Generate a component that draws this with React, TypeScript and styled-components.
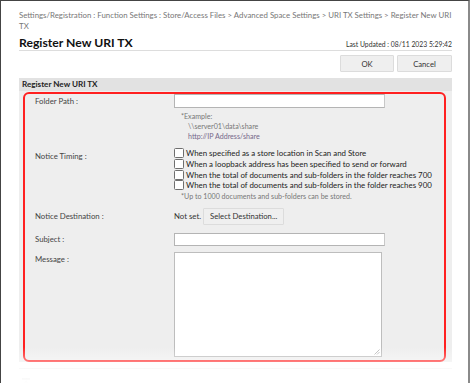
import React from 'react';
import styled, { createGlobalStyle } from 'styled-components';

const GlobalStyle = createGlobalStyle`
  html, body {
    margin: 0;
    padding: 0;
    background: #fff;
  }
  body {
    font-family: Lato, "Noto Sans", sans-serif;
    color: #333;
  }
`;

const Frame = styled.div`
  position: relative;
  box-sizing: border-box;
  width: 470px;
  height: 383px;
  overflow: hidden;
  border-top: 1px solid #444;
  border-left: 1px solid #444;
  border-right: 2px solid #8a8a8a;
  padding: 9px 16px 0 18px;

  &::after {
    content: '';
    position: absolute;
    left: -1px;
    right: -2px;
    bottom: 0;
    height: 36px;
    background: linear-gradient(to bottom, rgba(255, 255, 255, 0), #fff);
    pointer-events: none;
  }
`;

const Breadcrumb = styled.div`
  font-size: 7.85px;
  line-height: 10.5px;
  color: #777;
`;

const TitleRow = styled.div`
  display: flex;
  justify-content: space-between;
  align-items: flex-end;
  margin-top: 4px;
  border-bottom: 1px solid #ddd;
`;

const Title = styled.h1`
  margin: 0;
  font-size: 12.2px;
  line-height: 15px;
  font-weight: 700;
  color: #111;
`;

const Updated = styled.span`
  font-size: 6.8px;
  line-height: 11px;
  color: #333;
`;

const ButtonBar = styled.div`
  display: flex;
  justify-content: flex-end;
  gap: 3px;
  margin-top: 4px;
`;

const Button = styled.button<{ $width?: number }>`
  box-sizing: border-box;
  width: ${(p) => (p.$width ? `${p.$width}px` : 'auto')};
  height: 17px;
  padding: 0 6px;
  border: 1px solid #dcdcdc;
  background: #efefef;
  font-family: inherit;
  font-size: 7.7px;
  color: #333;
  border-radius: 1px;
`;

const Panel = styled.section`
  margin-top: 6px;
  background: #eeeeee;
`;

const PanelHeader = styled.div`
  height: 13px;
  padding-left: 3px;
  background: #e2e2e2;
  font-size: 8.1px;
  line-height: 13px;
  font-weight: 700;
  color: #222;
`;

const Highlight = styled.div`
  box-sizing: border-box;
  margin: 1px 6px -4px 4px;
  height: 270px;
  border: 2px solid #ff2020;
  border-radius: 6px;
  padding: 0 0 0 10px;
`;

const Row = styled.div<{ $top?: number }>`
  display: grid;
  grid-template-columns: 139px 1fr;
  margin-top: ${(p) => p.$top ?? 0}px;
`;

const Label = styled.div<{ $offset?: number }>`
  font-size: 7.8px;
  line-height: 12px;
  color: #444;
  padding-top: ${(p) => p.$offset ?? 0}px;
`;

const Value = styled.div`
  display: flex;
  flex-direction: column;
`;

const TextInput = styled.div<{ $height?: number }>`
  box-sizing: border-box;
  width: 211px;
  height: ${(p) => p.$height ?? 14}px;
  background: #fff;
  border: 1px solid #b4b4b4;
  border-right-color: #c8c8c8;
`;

const TextArea = styled.div`
  position: relative;
  box-sizing: border-box;
  width: 208px;
  height: 105px;
  background: #fff;
  border: 1px solid #bdbdbd;
`;

const Grip = styled.svg`
  position: absolute;
  right: 1px;
  bottom: 1px;
`;

const Note = styled.div<{ $indent?: number; $top?: number; $tint?: string }>`
  font-size: 7.1px;
  line-height: 10px;
  color: ${(p) => p.$tint ?? '#777'};
  padding-left: ${(p) => p.$indent ?? 7}px;
  margin-top: ${(p) => p.$top ?? 0}px;
`;

const Notes = styled.div`
  margin-top: 4px;
`;

const CheckRow = styled.label`
  display: flex;
  align-items: center;
  gap: 2px;
  height: 10.7px;
  font-size: 7.9px;
  color: #222;
  white-space: nowrap;
`;

const Box = styled.span`
  box-sizing: border-box;
  width: 10px;
  height: 10px;
  background: #fff;
  border: 1px solid #6e6e6e;
  border-radius: 1.5px;
  flex: none;
`;

const DestLine = styled.div`
  display: flex;
  align-items: center;
  gap: 2px;
  font-size: 7.8px;
  color: #333;
`;

const Footer = styled.div`
  margin-top: 10px;
  border-top: 1px solid #f0f0f0;
  padding: 2px 0 0 2px;
`;

const checks = [
  'When specified as a store location in Scan and Store',
  'When a loopback address has been specified to send or forward',
  'When the total of documents and sub-folders in the folder reaches 700',
  'When the total of documents and sub-folders in the folder reaches 900',
];

const App = () => {
  return (
    <>
      <GlobalStyle />
      <Frame>
        <Breadcrumb>
          Settings/Registration : Function Settings : Store/Access Files &gt; Advanced Space Settings &gt; URI TX
          Settings &gt; Register New URI TX
        </Breadcrumb>
        <TitleRow>
          <Title>Register New URI TX</Title>
          <Updated>Last Updated : 08/11 2023 5:29:42</Updated>
        </TitleRow>
        <ButtonBar>
          <Button $width={54}>OK</Button>
          <Button $width={55}>Cancel</Button>
        </ButtonBar>
        <Panel>
          <PanelHeader>Register New URI TX</PanelHeader>
          <Highlight>
            <Row>
              <Label $offset={1}>Folder Path :</Label>
              <Value>
                <TextInput />
                <Notes>
                  <Note>*Example:</Note>
                  <Note $indent={14}>\\server01\data\share</Note>
                  <Note $indent={14} $tint="#76698a">http://IP Address/share</Note>
                </Notes>
              </Value>
            </Row>
            <Row $top={6}>
              <Label $offset={2}>Notice Timing :</Label>
              <Value>
                {checks.map((c) => (
                  <CheckRow key={c}>
                    <Box />
                    {c}
                  </CheckRow>
                ))}
                <Note $top={1}>*Up to 1000 documents and sub-folders can be stored.</Note>
              </Value>
            </Row>
            <Row $top={6}>
              <Label $offset={2}>Notice Destination :</Label>
              <DestLine>
                Not set.
                <Button>Select Destination...</Button>
              </DestLine>
            </Row>
            <Row $top={8}>
              <Label>Subject :</Label>
              <TextInput $height={13} />
            </Row>
            <Row $top={6}>
              <Label $offset={1}>Message :</Label>
              <TextArea>
                <Grip width="6" height="6" viewBox="0 0 6 6">
                  <path d="M5.5 0.5 L0.5 5.5 M5.5 3 L3 5.5" stroke="#aaa" strokeWidth="0.8" />
                </Grip>
              </TextArea>
            </Row>
          </Highlight>
        </Panel>
        <Footer>
          <svg width="10" height="9" viewBox="0 0 10 9">
            <path d="M1 1 H9" stroke="#bbb" strokeWidth="1.2" />
            <path d="M5 2.5 L1.5 6 H3.5 V8.5 H6.5 V6 H8.5 Z" fill="#ccc" />
          </svg>
        </Footer>
      </Frame>
    </>
  );
};

export default App;
